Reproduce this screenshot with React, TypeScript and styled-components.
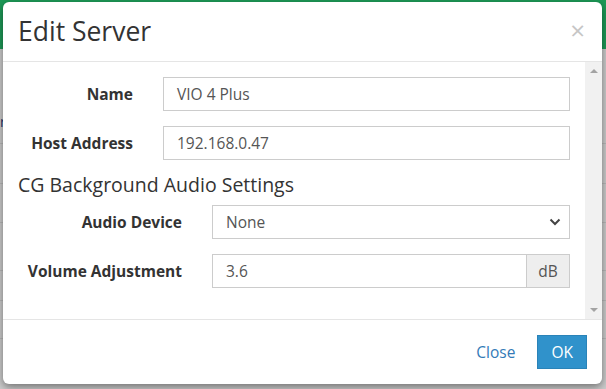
import React from "react";
import styled, {createGlobalStyle} from "styled-components";

const GlobalStyle = createGlobalStyle`
    html, body {
        margin: 0;
        padding: 0;
        width: 606px;
        height: 389px;
        overflow: hidden;
        background: #cccccc;
        font-family: "Open Sans", "Liberation Sans", Arial, sans-serif;
    }
    * {
        box-sizing: border-box;
    }
`

const Page = styled.div`
    position: relative;
    width: 606px;
    height: 389px;
    display: flex;
    flex-direction: column;
`
const TopBar = styled.div`
    height: 49px;
    background: #1d9a57;
`
const BackRow = styled.div<{ $h: number }>`
    height: ${p => p.$h}px;
    border-bottom: 1px solid #b9b9b9;
    display: flex;
    align-items: center;
`
const BackText = styled.span`
    font-size: 14px;
    color: #23356e;
    margin-top: 50px;
`

const Modal = styled.div`
    position: absolute;
    left: 3px;
    top: 2px;
    width: 599px;
    height: 382px;
    background: #fff;
    border-radius: 6px;
    box-shadow: 0 3px 9px rgba(0, 0, 0, 0.45);
    display: flex;
    flex-direction: column;
    overflow: hidden;
`
const Header = styled.div`
    height: 60px;
    padding: 0 15px;
    border-bottom: 1px solid #e5e5e5;
    display: flex;
    align-items: center;
    justify-content: space-between;

    h3 {
        margin: 0;
        font-size: 26.5px;
        font-weight: 400;
        color: #333;
        line-height: 1;
        padding-bottom: 1px;
    }
`
const CloseX = styled.span`
    font-size: 26px;
    font-weight: 400;
    color: #c6c6c6;
    line-height: 1;
    margin-right: 2px;
    padding-bottom: 4px;
`
const BodyWrap = styled.div`
    flex: 1 1;
    display: flex;
    min-height: 0;
`
const Body = styled.div`
    flex: 1 1;
    padding: 15px;
`
const Scrollbar = styled.div`
    width: 17px;
    background: #f1f1f1;
    display: flex;
    flex-direction: column;
    justify-content: space-between;
    align-items: center;
    padding: 7px 0;
`
const Arrow = styled.div<{ $down?: boolean }>`
    width: 0;
    height: 0;
    border-left: 4px solid transparent;
    border-right: 4px solid transparent;
    ${p => p.$down ? "border-top: 4px solid #a3a3a3;" : "border-bottom: 4px solid #a3a3a3;"}
`
const FormGroup = styled.div<{ $label: number }>`
    display: grid;
    grid-template-columns: ${p => p.$label}px 1fr;
    column-gap: 30px;
    align-items: center;
    margin-bottom: 15px;
`
const Label = styled.label`
    text-align: right;
    font-size: 15.5px;
    font-weight: 700;
    color: #333;
    white-space: nowrap;
`
const Input = styled.div`
    height: 34px;
    border: 1px solid #ccc;
    padding: 0 13px;
    display: flex;
    align-items: center;
    font-size: 15.5px;
    color: #555;
    background: #fff;
`
const SelectBox = styled(Input)`
    justify-content: space-between;
    padding-right: 7px;
`
const InputGroup = styled.div`
    display: flex;
    height: 34px;

    ${Input} {
        flex: 1 1;
        border-right: none;
    }
`
const Addon = styled.div`
    width: 44px;
    border: 1px solid #ccc;
    background: #eee;
    display: flex;
    align-items: center;
    justify-content: center;
    font-size: 15.5px;
    color: #555;
`
const SectionTitle = styled.h4`
    margin: 0 0 10px;
    font-size: 19.5px;
    font-weight: 400;
    color: #333;
    line-height: 20px;
`
const Footer = styled.div`
    height: 65px;
    border-top: 1px solid #e5e5e5;
    padding: 0 15px;
    display: flex;
    align-items: center;
    justify-content: flex-end;
    gap: 10px;
`
const LinkButton = styled.span`
    font-size: 15.5px;
    color: #337ab7;
    padding: 6px 12px;
`
const PrimaryButton = styled.span`
    height: 34px;
    padding: 0 13px;
    display: flex;
    align-items: center;
    font-size: 15.5px;
    color: #fff;
    background: #3092cb;
    border: 1px solid #2a83b8;
`

function App() {
    return (
        <Page>
            <GlobalStyle/>
            <TopBar/>
            <BackRow $h={95}>
                <BackText>r</BackText>
            </BackRow>
            <BackRow $h={40}/>
            <BackRow $h={39}/>
            <BackRow $h={48}/>
            <BackRow $h={30}/>
            <BackRow $h={38}/>
            <Modal>
                <Header>
                    <h3>Edit Server</h3>
                    <CloseX>×</CloseX>
                </Header>
                <BodyWrap>
                    <Body>
                        <FormGroup $label={115}>
                            <Label>Name</Label>
                            <Input>VIO 4 Plus</Input>
                        </FormGroup>
                        <FormGroup $label={115}>
                            <Label>Host Address</Label>
                            <Input>192.168.0.47</Input>
                        </FormGroup>
                        <SectionTitle>CG Background Audio Settings</SectionTitle>
                        <FormGroup $label={164}>
                            <Label>Audio Device</Label>
                            <SelectBox>
                                None
                                <svg width="14" height="8" viewBox="0 0 14 8">
                                    <path d="M2.5 1.5 L7 6 L11.5 1.5" stroke="#444" strokeWidth="2" fill="none"/>
                                </svg>
                            </SelectBox>
                        </FormGroup>
                        <FormGroup $label={164}>
                            <Label>Volume Adjustment</Label>
                            <InputGroup>
                                <Input>3.6</Input>
                                <Addon>dB</Addon>
                            </InputGroup>
                        </FormGroup>
                    </Body>
                    <Scrollbar>
                        <Arrow/>
                        <Arrow $down/>
                    </Scrollbar>
                </BodyWrap>
                <Footer>
                    <LinkButton>Close</LinkButton>
                    <PrimaryButton>OK</PrimaryButton>
                </Footer>
            </Modal>
        </Page>
    );
}

export default App;
